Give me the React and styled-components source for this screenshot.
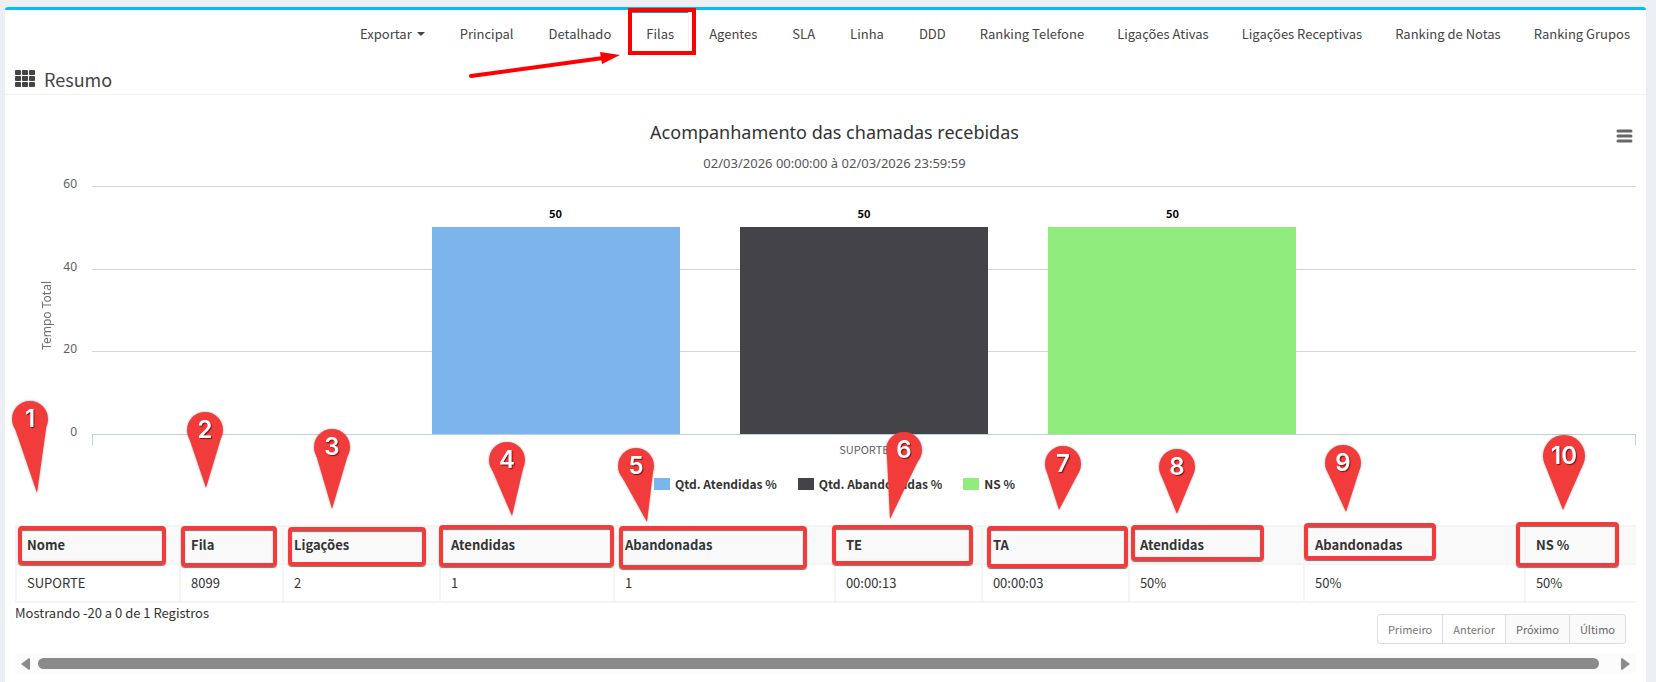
import React from 'react';
import styled, { createGlobalStyle, css } from 'styled-components';

const GlobalStyle = createGlobalStyle`
  *, *::before, *::after { box-sizing: border-box; }
  body {
    margin: 0;
    background: #ecf0f5;
    color: #333;
    font-family: "Noto Sans CJK SC", "Open Sans", sans-serif;
    font-size: 13px;
    line-height: 20px;
  }
`;

const chartFont = '"Noto Sans", "Open Sans", sans-serif';

const Page = styled.main`
  padding: 7px 10px 0 5px;
`;

const Panel = styled.section`
  min-height: calc(100vh - 7px);
  background: #fff;
  border-top: 3px solid #00c0ef;
  border-radius: 3px 3px 0 0;
  box-shadow: 0 1px 1px rgba(0, 0, 0, 0.1);
`;

const Tabs = styled.nav`
  display: flex;
  justify-content: flex-end;
  gap: 6px;
  padding-right: 2px;
`;

const Tab = styled.div`
  position: relative;
  height: 44px;
  padding: 11px ${(p) => (p.$wide ? 13 : 14)}px 0;
  border-top: 3px solid ${(p) => (p.$active ? '#3c8dbc' : 'transparent')};
  border-right: 1px solid ${(p) => (p.$active ? '#f4f4f4' : 'transparent')};
`;

const tabText = css`
  display: flex;
  align-items: center;
  gap: 5px;
  padding: 0;
  border: 0;
  background: none;
  color: #444;
  font: inherit;
  line-height: 20px;
  white-space: nowrap;
  text-decoration: none;
`;

const TabLink = styled.a`${tabText}`;
const TabButton = styled.button`${tabText}`;

const Caret = styled.span`
  border: 4px solid transparent;
  border-top-color: #444;
  border-bottom: 0;
`;

const TabHighlight = styled.span`
  position: absolute;
  top: -5px;
  left: -4px;
  right: -8px;
  height: 47px;
  border: 4px solid #f00;
`;

const ArrowDrawing = styled.svg`
  position: absolute;
  top: 37px;
  left: -165px;
  width: 154px;
  height: 30px;
  pointer-events: none;
`;

const Header = styled.header`
  display: flex;
  align-items: center;
  gap: 9px;
  height: 41px;
  padding: 12px 10px 4px;
  border-bottom: 1px solid #f4f4f4;
  color: #444;
`;

const Title = styled.h1`
  margin: 0;
  padding-top: 2px;
  font-size: 18px;
  font-weight: 400;
  line-height: 24px;
`;

const Body = styled.div`
  padding: 25px 10px 0;
`;

const ChartHead = styled.div`
  display: grid;
  grid-template-columns: 52px 1fr 34px;
`;

const ChartTitles = styled.div`
  grid-column: 2;
  font-family: ${chartFont};
  text-align: center;
`;

const ChartTitle = styled.h2`
  margin: 0 0 9px;
  color: #333;
  font-size: 18px;
  font-weight: 400;
  line-height: 24px;
`;

const ChartSubtitle = styled.p`
  margin: 0 0 13px;
  color: #555;
  font-size: 13px;
  line-height: 20px;
`;

const MenuButton = styled.button`
  display: flex;
  align-items: center;
  justify-content: flex-end;
  height: 32px;
  padding: 0 3px 0 0;
  border: 0;
  background: none;
`;

const ChartArea = styled.div`
  display: grid;
  grid-template-columns: 24px 1fr;
  padding-left: 20px;
`;

const AxisTitle = styled.span`
  align-self: center;
  justify-self: center;
  color: #707070;
  font-family: ${chartFont};
  font-size: 12px;
  line-height: 20px;
  writing-mode: vertical-rl;
  transform: rotate(180deg);
`;

const PlotRow = styled.div`
  display: grid;
  grid-template-columns: 18px 1fr;
  column-gap: 15px;
`;

const Scale = styled.div`
  display: flex;
  flex-direction: column;
  justify-content: space-between;
  height: 264px;
  margin: -10px 0 -6px;
  color: #606060;
  font-family: ${chartFont};
  font-size: 12px;
  line-height: 16px;
  text-align: right;
`;

const Plot = styled.div`
  display: grid;
  height: 249px;
  border-bottom: 1px solid #c0d0e0;
`;

const GridLines = styled.div`
  display: grid;
  grid-area: 1 / 1;
  grid-template-rows: repeat(3, 1fr);
`;

const GridLine = styled.div`
  border-top: 1px solid #d8d8d8;
`;

const Bars = styled.div`
  display: grid;
  grid-area: 1 / 1;
  grid-template-columns: repeat(3, 1fr);
  column-gap: 7%;
  padding: 0 22%;
`;

const BarColumn = styled.div`
  display: flex;
  flex-direction: column;
  justify-content: flex-end;
  min-height: 0;
`;

const BarValue = styled.span`
  margin-bottom: 6px;
  color: #000;
  font-size: 11px;
  font-weight: 700;
  line-height: 16px;
  text-align: center;
`;

const Bar = styled.div`
  flex: none;
  background: ${(p) => p.$color};
`;

const Category = styled.div`
  grid-column: 2;
  height: 10px;
  border: solid #c0d0e0;
  border-width: 0 1px;
  color: #606060;
  font-size: 11px;
  line-height: 28px;
  text-align: center;
`;

const Legend = styled.ul`
  display: flex;
  justify-content: center;
  gap: 21px;
  margin: 31px 0 33px;
  padding: 0 0 0 18px;
  list-style: none;
`;

const LegendItem = styled.li`
  display: flex;
  align-items: center;
  gap: 5px;
  color: #333;
  font-size: 12px;
  font-weight: 700;
  line-height: 16px;
`;

const Swatch = styled.span`
  width: 16px;
  height: 12px;
  background: ${(p) => p.$color};
`;

const Table = styled.table`
  width: 100%;
  table-layout: fixed;
  border-collapse: separate;
  border-spacing: 0;
  border-top: 2px solid #f4f4f4;
`;

const Col = styled.col`
  width: ${(p) => p.$share}%;
`;

const cell = css`
  height: 38px;
  padding: 0 10px;
  border: solid #f4f4f4;
  border-width: 0 0 2px 2px;
  line-height: 20px;
  text-align: left;
  white-space: nowrap;
`;

const HeadCell = styled.th`
  ${cell}
  position: relative;
  background: #f9f9f9;
  font-weight: 700;
`;

const Cell = styled.td`${cell}`;

const Outline = styled.span`
  position: absolute;
  z-index: 1;
  left: ${(p) => p.$x}px;
  top: ${(p) => p.$y}px;
  width: ${(p) => p.$w}px;
  height: ${(p) => p.$h}px;
  border: 4px solid #f23c3c;
  border-radius: 4px;
  box-shadow: 0 1px 1px rgba(60, 60, 60, 0.7), inset 0 1px 1px rgba(60, 60, 60, 0.7);
`;

const PinDrawing = styled.svg`
  position: absolute;
  left: ${(p) => p.$x}px;
  top: ${(p) => p.$y}px;
  width: 60px;
  height: 100px;
  overflow: visible;
  pointer-events: none;
  filter: drop-shadow(0 0 1px rgba(90, 90, 90, 0.5));

  text {
    fill: #fff;
    font: 600 24px Inter, "Liberation Sans", sans-serif;
    text-anchor: middle;
    text-shadow: 1px 1px 1px rgba(60, 0, 0, 0.7);
  }
`;

const Footer = styled.footer`
  display: flex;
  justify-content: space-between;
  padding-right: 10px;
`;

const Pager = styled.div`
  display: flex;
  margin: 11px 0 10px;
`;

const PageButton = styled.button`
  height: 30px;
  margin-left: -1px;
  padding: 0 10px;
  border: 1px solid #ddd;
  background: ${(p) => (p.$muted ? '#fff' : '#fafafa')};
  color: ${(p) => (p.$muted ? '#777' : '#666')};
  font: inherit;
  font-size: 11px;
  line-height: 18px;

  &:first-child { border-radius: 3px 0 0 3px; }
  &:last-child { border-radius: 0 3px 3px 0; }
`;

const ScrollTrack = styled.div`
  display: flex;
  align-items: center;
  justify-content: space-between;
  height: 19px;
  padding: 0 6px;
  background: #fcfcfc;
`;

const ScrollThumb = styled.div`
  flex: 1;
  height: 11px;
  margin: 0 22px 0 8px;
  border-radius: 6px;
  background: #8b8b8b;
`;

const tabs = [
  'Principal', 'Detalhado', 'Filas', 'Agentes', 'SLA', 'Linha', 'DDD', 'Ranking Telefone',
  'Ligações Ativas', 'Ligações Receptivas', 'Ranking de Notas', 'Ranking Grupos',
];

const scaleMax = 60;
const series = [
  { name: 'Qtd. Atendidas %', value: 50, color: '#7cb5ec' },
  { name: 'Qtd. Abandonadas %', value: 50, color: '#434348' },
  { name: 'NS %', value: 50, color: '#90ed7d' },
];

/* box: outline [x, y, width, height]; head and tip: pin points, all relative to the header cell */
const columns = [
  { label: 'Nome', value: 'SUPORTE', share: 10.12, box: [1, -1, 148, 39], head: [13, -108], tip: [20, -34] },
  { label: 'Fila', value: '8099', share: 6.35, box: [0, -1, 96, 41], head: [24, -97], tip: [25, -39] },
  { label: 'Ligações', value: '2', share: 9.69, box: [4, 0, 138, 39], head: [48, -80], tip: [48, -18] },
  { label: 'Atendidas', value: '1', share: 10.73, box: [-2, -2, 175, 42], head: [66, -67], tip: [71, -11] },
  { label: 'Abandonadas', value: '1', share: 13.63, box: [4, -1, 188, 43], head: [21, -61], tip: [32, -5] },
  { label: 'TE', value: '00:00:13', share: 9.07, box: [-4, -2, 141, 40], head: [68, -77], tip: [54, -8] },
  { label: 'TA', value: '00:00:03', share: 9.07, box: [4, -1, 141, 42], head: [80, -63], tip: [76, -17] },
  { label: 'Atendidas', value: '50%', share: 10.8, box: [1, -2, 133, 36], head: [47, -60], tip: [47, -13] },
  { label: 'Abandonadas', value: '50%', share: 13.63, box: [-1, -4, 132, 37], head: [38, -64], tip: [41, -15] },
  { label: 'NS %', value: '50%', share: 6.91, box: [-10, -5, 103, 45], head: [38, -71], tip: [37, -17], radius: 21 },
];

function Pin({ number, head, tip, radius = 18 }) {
  const dx = tip[0] - head[0];
  const dy = tip[1] - head[1];
  const direction = Math.atan2(dy, dx);
  const edge = (side) => {
    const a = direction + (side * Math.PI) / 3;
    return `${30 + radius * Math.cos(a)},${30 + radius * Math.sin(a)}`;
  };
  return (
    <PinDrawing $x={head[0] - 30} $y={head[1] - 30} viewBox="0 0 60 100" aria-hidden="true">
      <circle cx="30" cy="30" r={radius} fill="#f23c3c" />
      <polygon points={`${edge(-1)} ${30 + dx},${30 + dy} ${edge(1)} 30,30`} fill="#f23c3c" />
      <text x="30" y="38">{number}</text>
    </PinDrawing>
  );
}

function GridIcon() {
  return (
    <svg width="20" height="17" viewBox="0 0 20 17" fill="#444" aria-hidden="true">
      {[0, 6, 12].map((y) => [0, 7, 14].map((x) => (
        <rect key={`${x}-${y}`} x={x} y={y} width="6" height="5" rx="1" />
      )))}
    </svg>
  );
}

export default function App() {
  return (
    <>
      <GlobalStyle />
      <Page>
        <Panel>
          <Tabs>
            <Tab><TabButton type="button">Exportar <Caret /></TabButton></Tab>
            {tabs.map((name) => (
              <Tab key={name} $active={name === 'Filas'} $wide={name.includes(' ')}>
                <TabLink href="#">{name}</TabLink>
                {name === 'Filas' && (
                  <>
                    <TabHighlight />
                    <ArrowDrawing viewBox="0 0 154 30" aria-hidden="true">
                      <path d="M4 26 L136 8" stroke="#f00" strokeWidth="4" strokeLinecap="round" />
                      <path d="M133 2 L153 5 L135 14 Z" fill="#f00" />
                    </ArrowDrawing>
                  </>
                )}
              </Tab>
            ))}
          </Tabs>

          <Header>
            <GridIcon />
            <Title>Resumo</Title>
          </Header>

          <Body>
            <ChartHead>
              <ChartTitles>
                <ChartTitle>Acompanhamento das chamadas recebidas</ChartTitle>
                <ChartSubtitle>02/03/2026 00:00:00 à 02/03/2026 23:59:59</ChartSubtitle>
              </ChartTitles>
              <MenuButton type="button" aria-label="Menu do gráfico">
                <svg width="17" height="14" viewBox="0 0 17 14" stroke="#666" strokeWidth="3" strokeLinecap="round">
                  <path d="M2 2H15M2 7H15M2 12H15" />
                </svg>
              </MenuButton>
            </ChartHead>

            <ChartArea>
              <AxisTitle>Tempo Total</AxisTitle>
              <PlotRow>
                <Scale>
                  {[60, 40, 20, 0].map((n) => <span key={n}>{n}</span>)}
                </Scale>
                <Plot>
                  <GridLines><GridLine /><GridLine /><GridLine /></GridLines>
                  <Bars>
                    {series.map((s) => (
                      <BarColumn key={s.name}>
                        <BarValue>{s.value}</BarValue>
                        <Bar $color={s.color} style={{ height: `${(s.value / scaleMax) * 100}%` }} />
                      </BarColumn>
                    ))}
                  </Bars>
                </Plot>
                <Category>SUPORTE</Category>
              </PlotRow>
            </ChartArea>

            <Legend>
              {series.map((s) => (
                <LegendItem key={s.name}><Swatch $color={s.color} />{s.name}</LegendItem>
              ))}
            </Legend>

            <Table>
              <colgroup>
                {columns.map((c, i) => <Col key={i} $share={c.share} />)}
              </colgroup>
              <thead>
                <tr>
                  {columns.map((c, i) => (
                    <HeadCell key={i} scope="col">
                      {c.label}
                      <Outline $x={c.box[0]} $y={c.box[1]} $w={c.box[2]} $h={c.box[3]} />
                      <Pin number={i + 1} head={c.head} tip={c.tip} radius={c.radius} />
                    </HeadCell>
                  ))}
                </tr>
              </thead>
              <tbody>
                <tr>{columns.map((c, i) => <Cell key={i}>{c.value}</Cell>)}</tr>
              </tbody>
            </Table>

            <Footer>
              <span>Mostrando -20 a 0 de 1 Registros</span>
              <Pager>
                <PageButton type="button" $muted>Primeiro</PageButton>
                <PageButton type="button" $muted>Anterior</PageButton>
                <PageButton type="button">Próximo</PageButton>
                <PageButton type="button">Último</PageButton>
              </Pager>
            </Footer>

            <ScrollTrack aria-hidden="true">
              <svg width="9" height="12" viewBox="0 0 9 12" fill="#8b8b8b"><path d="M9 1V11Q9 12 8 12L0 6L8 0Q9 0 9 1Z" /></svg>
              <ScrollThumb />
              <svg width="9" height="12" viewBox="0 0 9 12" fill="#8b8b8b"><path d="M0 1V11Q0 12 1 12L9 6L1 0Q0 0 0 1Z" /></svg>
            </ScrollTrack>
          </Body>
        </Panel>
      </Page>
    </>
  );
}
